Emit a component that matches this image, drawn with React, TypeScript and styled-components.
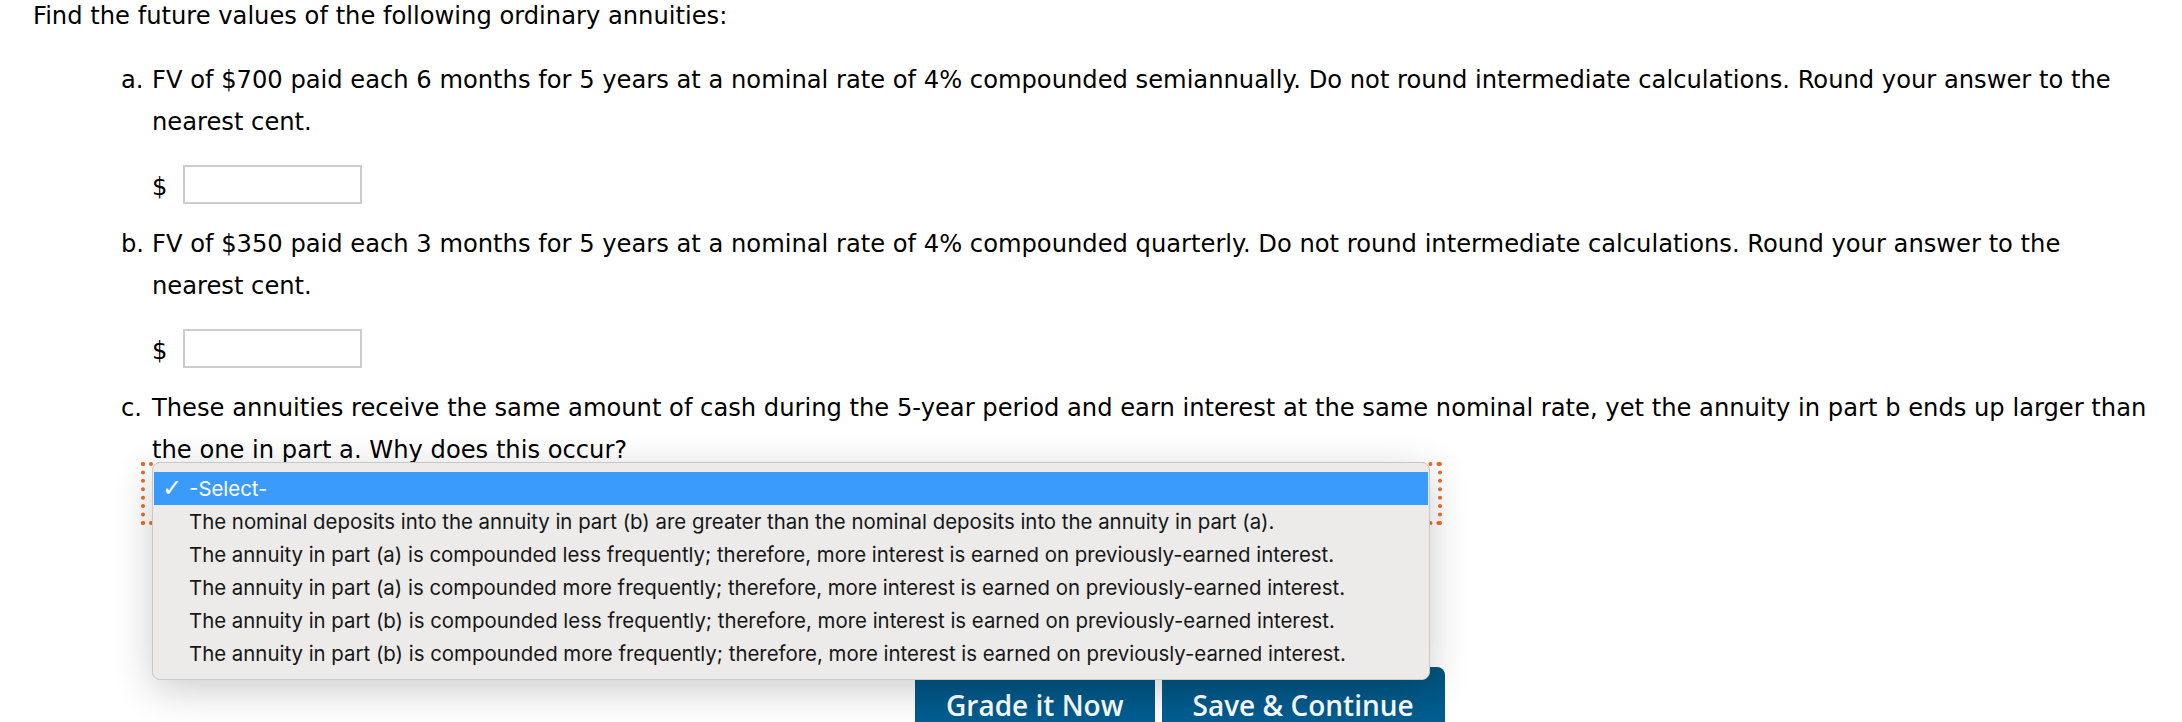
import React from 'react';
import styled, { createGlobalStyle } from 'styled-components';

const GlobalStyle = createGlobalStyle`
  html, body {
    margin: 0;
    padding: 0;
    background: #ffffff;
  }
  body {
    font-family: "DejaVu Sans", Verdana, sans-serif;
    font-size: 24.2px;
    color: #000000;
    overflow: hidden;
  }
`;

const Page = styled.div`
  width: 2120px;
  padding: 1px 0 0 33px;
`;

const Intro = styled.p`
  margin: 0 0 28px;
  line-height: 30px;
`;

const Questions = styled.ol`
  list-style: none;
  margin: 0;
  padding: 0 0 0 88px;
`;

const Question = styled.li`
  display: grid;
  grid-template-columns: 31px 1fr;
  margin-bottom: 19px;
  line-height: 42px;
`;

const Marker = styled.span``;

const Body = styled.div`
  display: flex;
  flex-direction: column;
`;

const Prompt = styled.p`
  margin: 0;
`;

const AnswerRow = styled.div`
  display: flex;
  align-items: center;
  gap: 16px;
  margin-top: 22px;
  line-height: 1;
`;

const Currency = styled.span`
  padding-top: 6px;
`;

const AmountInput = styled.input`
  box-sizing: border-box;
  width: 179px;
  height: 39px;
  border: 2px solid #cccccc;
  background: #ffffff;
  font: inherit;
  padding: 0 6px;
  outline: none;
`;

const SelectArea = styled.div`
  position: relative;
  margin: -9px 0 0 -11px;
`;

const SelectBox = styled.div`
  box-sizing: border-box;
  width: 1301px;
  height: 63px;
  border: 4px dotted #f06a1f;
`;

const Popup = styled.ul`
  position: absolute;
  top: 0;
  left: 11px;
  z-index: 5;
  box-sizing: border-box;
  width: 1278px;
  margin: 0;
  padding: 9px 1px 9px;
  list-style: none;
  background: #ecebea;
  border: 1px solid #c9c8c7;
  border-radius: 8px;
  box-shadow: 0 10px 40px rgba(0, 0, 0, 0.2);
  font-family: Inter, "Liberation Sans", sans-serif;
  font-size: 20.4px;
  line-height: 33px;
`;

const Option = styled.li<{ $active?: boolean }>`
  position: relative;
  height: 33px;
  padding-left: 35px;
  white-space: nowrap;
  color: ${(p) => (p.$active ? '#ffffff' : '#161616')};
  background: ${(p) => (p.$active ? '#3a9bfc' : 'transparent')};
`;

const Check = styled.span`
  position: absolute;
  left: 8px;
  top: 0;
  font-family: "DejaVu Sans", sans-serif;
  font-size: 24px;
`;

const ButtonBar = styled.div`
  display: flex;
  gap: 7px;
  margin: 142px 0 0 882px;
`;

const ActionButton = styled.button`
  border: none;
  border-radius: 8px 8px 0 0;
  background: linear-gradient(#00547f, #005f95);
  color: #ffffff;
  font-family: "Open Sans", sans-serif;
  font-weight: 600;
  font-size: 28px;
  line-height: 28px;
  padding: 24px 31px 10px;
`;

const options = [
  '-Select-',
  'The nominal deposits into the annuity in part (b) are greater than the nominal deposits into the annuity in part (a).',
  'The annuity in part (a) is compounded less frequently; therefore, more interest is earned on previously-earned interest.',
  'The annuity in part (a) is compounded more frequently; therefore, more interest is earned on previously-earned interest.',
  'The annuity in part (b) is compounded less frequently; therefore, more interest is earned on previously-earned interest.',
  'The annuity in part (b) is compounded more frequently; therefore, more interest is earned on previously-earned interest.',
];

export default function App() {
  return (
    <Page>
      <GlobalStyle />
      <Intro>Find the future values of the following ordinary annuities:</Intro>
      <Questions>
        <Question>
          <Marker>a.</Marker>
          <Body>
            <Prompt>
              FV of $700 paid each 6 months for 5 years at a nominal rate of 4% compounded semiannually. Do not round
              intermediate calculations. Round your answer to the nearest cent.
            </Prompt>
            <AnswerRow>
              <Currency>$</Currency>
              <AmountInput type="text" />
            </AnswerRow>
          </Body>
        </Question>
        <Question>
          <Marker>b.</Marker>
          <Body>
            <Prompt>
              FV of $350 paid each 3 months for 5 years at a nominal rate of 4% compounded quarterly. Do not round
              intermediate calculations. Round your answer to the nearest cent.
            </Prompt>
            <AnswerRow>
              <Currency>$</Currency>
              <AmountInput type="text" />
            </AnswerRow>
          </Body>
        </Question>
        <Question>
          <Marker>c.</Marker>
          <Body>
            <Prompt>
              These annuities receive the same amount of cash during the 5-year period and earn interest at the same
              nominal rate, yet the annuity in part b ends up larger than the one in part a. Why does this occur?
            </Prompt>
            <SelectArea>
              <SelectBox />
              <Popup>
                {options.map((o, i) => (
                  <Option key={i} $active={i === 0}>
                    {i === 0 && <Check>✓</Check>}
                    {o}
                  </Option>
                ))}
              </Popup>
            </SelectArea>
          </Body>
        </Question>
      </Questions>
      <ButtonBar>
        <ActionButton>Grade it Now</ActionButton>
        <ActionButton>Save &amp; Continue</ActionButton>
      </ButtonBar>
    </Page>
  );
}
